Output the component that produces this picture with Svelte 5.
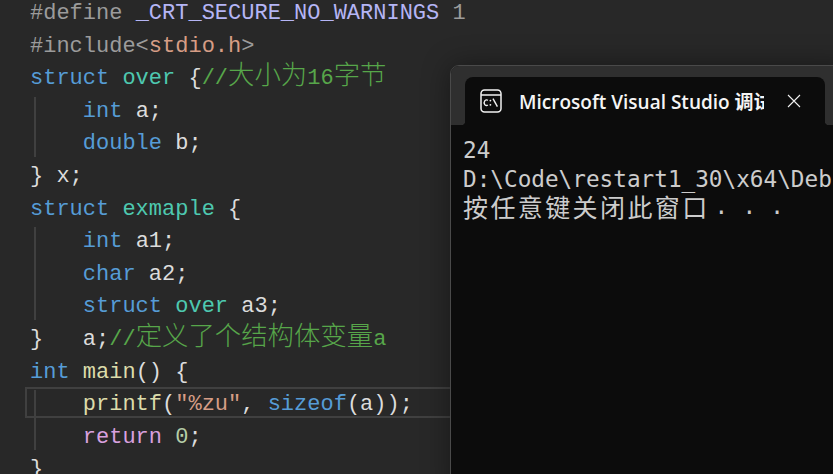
<script>
  const head = [
    [["#define ", "pre"], ["_CRT_SECURE_NO_WARNINGS", "mac"], [" 1", "pre"]],
    [["#include<", "pre"], ["stdio.h", "str"], [">", "pre"]],
    [["struct ", "kw"], ["over", "ty"], [" {", ""], ["//", "com"], ["大小为", "com cjk"], ["16", "com"], ["字节", "com cjk"]],
  ];
  const first = [
    [["    int ", "kw"], ["a;", ""]],
    [["    double ", "kw"], ["b;", ""]],
  ];
  const mid = [
    [["} x;", ""]],
    [["struct ", "kw"], ["exmaple", "ty"], [" {", ""]],
  ];
  const second = [
    [["    int ", "kw"], ["a1;", ""]],
    [["    char ", "kw"], ["a2;", ""]],
    [["    struct ", "kw"], ["over", "ty"], [" a3;", ""]],
  ];
  const tail = [
    [["}   a;", ""], ["//", "com"], ["定义了个结构体变量", "com cjk"], ["a", "com"]],
    [["int ", "kw"], ["main", "fn"], ["() {", ""]],
  ];
  const third = [
    [["    ", ""], ["printf", "fn"], ["(", ""], ['"%zu"', "str"], [", ", ""], ["sizeof", "kw"], ["(a));", ""]],
    [["    ", ""], ["return", "ret"], [" ", ""], ["0", "num"], [";", ""]],
  ];
  const end = [[["}", ""]]];
</script>

{#snippet lines(rows)}
  {#each rows as row}
    <div class="line">{#each row as [text, cls]}<span class={cls}>{text}</span>{/each}</div>
  {/each}
{/snippet}

<main class="editor">
  <div class="code">
    {@render lines(head)}
    <div class="block">{@render lines(first)}</div>
    {@render lines(mid)}
    <div class="block">{@render lines(second)}</div>
    {@render lines(tail)}
    <div class="block current">{@render lines(third)}</div>
    {@render lines(end)}
  </div>

  <section class="console">
    <header class="titlebar">
      <div class="tab">
        <svg class="tab-icon" width="22" height="24" viewBox="0 0 22 24" fill="none">
          <rect x="1" y="1" width="20" height="22" rx="3.5" stroke="#f2f2f2" stroke-width="1.5" />
          <path d="M1 6h20" stroke="#f2f2f2" stroke-width="1.5" />
          <path d="M7.8 11.4a2.3 2.8 0 1 0 0 4.6" stroke="#f2f2f2" stroke-width="1.4" />
          <path d="M10.4 11.6h.01M10.4 15.8h.01" stroke="#f2f2f2" stroke-width="1.8" stroke-linecap="round" />
          <path d="M13 9.6l4.4 8" stroke="#f2f2f2" stroke-width="1.4" />
        </svg>
        <span class="tab-title">Microsoft Visual Studio 调试控制台</span>
        <svg class="tab-close" width="14" height="14" viewBox="0 0 14 14">
          <path d="M1 1l12 12M13 1L1 13" stroke="#f0f0f0" stroke-width="1.1" />
        </svg>
      </div>
    </header>
    <div class="output">
      <div>24</div>
      <div>D:\Code\restart1_30\x64\Debug\restart1_30.exe</div>
      <div><span class="wide">按任意键关闭此窗口</span><span class="dots">. . .</span></div>
    </div>
  </section>
</main>

<style>
  :global(body) {
    margin: 0;
    background: #282828;
  }
  .editor {
    position: relative;
    width: 833px;
    height: 474px;
    overflow: hidden;
    background: #282828;
    display: flow-root;
  }
  .code {
    margin-top: -2px;
    font-family: "Liberation Mono", monospace;
    font-size: 22px;
    color: #dcdcdc;
  }
  .line {
    height: 32.6px;
    line-height: 32.6px;
    padding-left: 30px;
    white-space: pre;
  }
  .block {
    position: relative;
  }
  .block::before {
    content: "";
    position: absolute;
    left: 34px;
    top: 1px;
    bottom: 4px;
    width: 2px;
    background: #404040;
  }
  .current::after {
    content: "";
    position: absolute;
    left: 25px;
    right: 0;
    top: -2px;
    height: 27px;
    border: 2px solid #404040;
  }
  .pre { color: #9b9b9b; }
  .mac { color: #b5b5f5; }
  .kw { color: #569cd6; }
  .ty { color: #4ec9b0; }
  .com { color: #57a64a; }
  .cjk {
    font-family: "Noto Sans CJK SC", sans-serif;
    font-size: 26.4px;
    line-height: 0;
    font-weight: 300;
  }
  .str { color: #d69d85; }
  .fn { color: #dcdcaa; }
  .ret { color: #d8a0df; }
  .num { color: #b5cea8; }

  .console {
    position: absolute;
    left: 450px;
    top: 65px;
    width: 400px;
    height: 430px;
    border: 1px solid #4a4a4a;
    border-radius: 9px;
    background: #0c0c0c;
    box-shadow: 0 0 28px rgba(0, 0, 0, 0.4);
    overflow: hidden;
  }
  .titlebar {
    height: 59px;
    padding: 11px 0 0 14px;
    box-sizing: border-box;
    background: #2f2f2f;
  }
  .tab {
    position: relative;
    display: flex;
    align-items: center;
    width: 360px;
    height: 48px;
    box-sizing: border-box;
    padding-left: 15px;
    background: #0c0c0c;
    border-radius: 8px 8px 0 0;
  }
  .tab::before,
  .tab::after {
    content: "";
    position: absolute;
    bottom: 0;
    width: 4px;
    height: 4px;
  }
  .tab::before {
    left: -4px;
    background: radial-gradient(circle at 0 0, #2f2f2f 4px, #0c0c0c 4.5px);
  }
  .tab::after {
    right: -4px;
    background: radial-gradient(circle at 100% 0, #2f2f2f 4px, #0c0c0c 4.5px);
  }
  .tab-icon {
    flex: none;
    margin-right: 17px;
  }
  .tab-title {
    flex: none;
    width: 245px;
    overflow: hidden;
    white-space: nowrap;
    font-family: "Open Sans", "Noto Sans CJK SC", sans-serif;
    font-size: 19px;
    font-weight: 600;
    color: #f5f5f5;
  }
  .tab-close {
    flex: none;
    margin-left: 23px;
  }
  .output {
    padding: 11px 0 0 12px;
    font-family: "DejaVu Sans Mono", monospace;
    font-size: 22.7px;
    line-height: 29px;
    color: #cccccc;
    white-space: nowrap;
  }
  .wide {
    font-family: "Noto Sans CJK SC", sans-serif;
    font-size: 25px;
    letter-spacing: 2.4px;
    line-height: 1;
  }
  .dots {
    margin-left: 5px;
    word-spacing: 0.5px;
    vertical-align: 3px;
    line-height: 0;
  }
</style>
